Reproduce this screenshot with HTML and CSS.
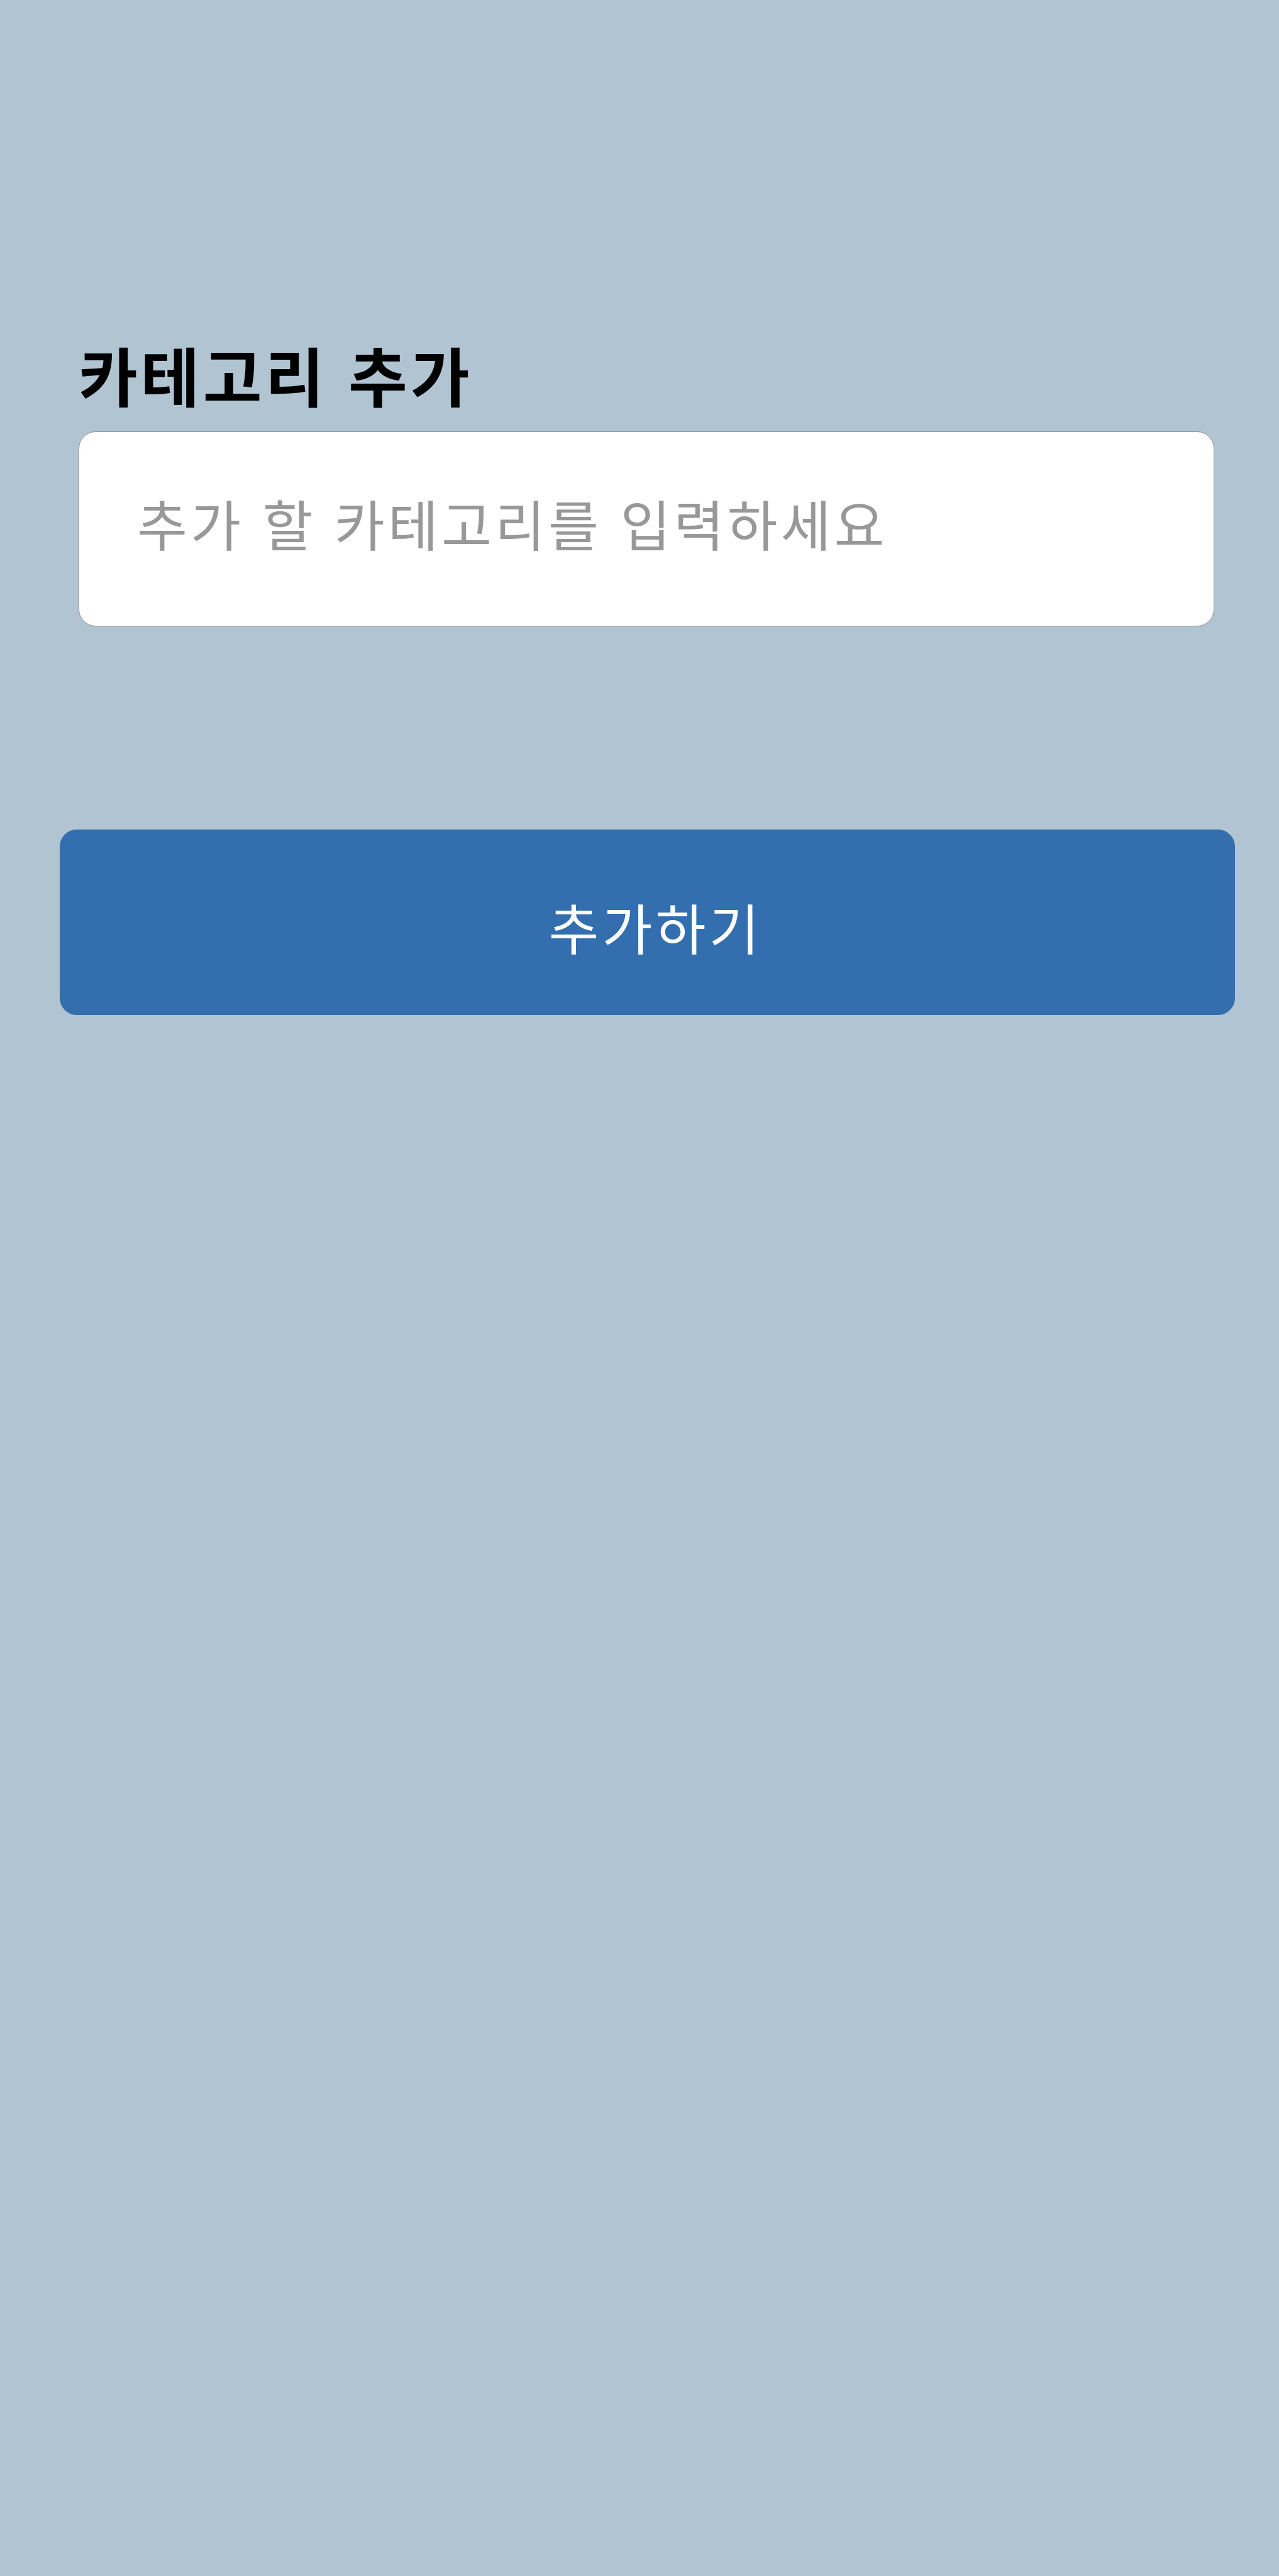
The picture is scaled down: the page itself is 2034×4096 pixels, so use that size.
FILE: index.html
```html
<!DOCTYPE html>
<html lang="ko">
<head>
  <meta charset="UTF-8">
  <meta name="viewport" content="width=device-width, initial-scale=1">
  <title>카테고리 추가</title>
  <link rel="stylesheet" href="styles.css">
</head>
<body>
  <main class="page">
    <form class="category-form">
      <div class="field">
        <label class="field-label" for="category">카테고리 추가</label>
        <input class="field-input" id="category" name="category" type="text" placeholder="추가 할 카테고리를 입력하세요">
      </div>
      <button class="submit-button" type="button">추가하기</button>
    </form>
  </main>
</body>
</html>
```

FILE: styles.css
```css
* {
  box-sizing: border-box;
}

body {
  margin: 0;
  background: #b1c4d2;
  font-family: "Noto Sans CJK KR", sans-serif;
}

.page {
  min-height: 100vh;
  padding: 520px 70px 0 95px;
}

.category-form {
  display: flex;
  flex-direction: column;
  gap: 323px;
}

.field {
  display: flex;
  flex-direction: column;
  gap: 16px;
  padding: 0 33px 0 30px;
}

.field-label {
  color: #000;
  font-size: 102px;
  font-weight: 700;
  line-height: 150px;
  letter-spacing: 5px;
}

.field-input {
  width: 100%;
  height: 310px;
  padding: 0 92px 20px;
  border: 1px solid #8f8f8f;
  border-radius: 27px;
  background: #fff;
  color: #000;
  font: inherit;
  font-size: 87px;
  letter-spacing: 5px;
}

.field-input::placeholder {
  color: #989898;
  opacity: 1;
}

.submit-button {
  height: 295px;
  padding: 12px 0 0 26px;
  border: 0;
  border-radius: 27px;
  background: #336eae;
  color: #fff;
  font: inherit;
  font-size: 87px;
  letter-spacing: 5px;
}
```
